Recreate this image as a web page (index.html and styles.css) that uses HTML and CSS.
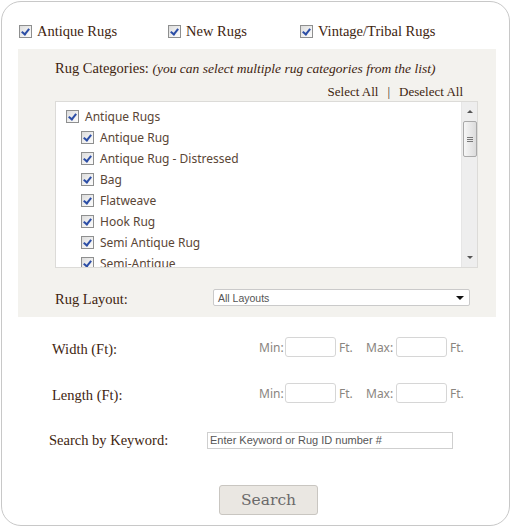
FILE: index.html
```html
<!DOCTYPE html>
<html>
<head>
<meta charset="utf-8">
<link rel="stylesheet" href="styles.css">
</head>
<body>
<div class="wrap">
  <div class="top">
    <label class="tc"><span class="cb"></span>Antique Rugs</label>
    <label class="tc"><span class="cb"></span>New Rugs</label>
    <label class="tc"><span class="cb"></span>Vintage/Tribal Rugs</label>
  </div>
  <div class="panel">
    <div class="cat-title">Rug Categories: <em>(you can select multiple rug categories from the list)</em></div>
    <div class="sel-links"><span>Select All</span><span class="sep">|</span><span>Deselect All</span></div>
    <div class="listbox">
      <div class="items">
        <div class="item"><span class="cb"></span>Antique Rugs</div>
        <div class="item sub"><span class="cb"></span>Antique Rug</div>
        <div class="item sub"><span class="cb"></span>Antique Rug - Distressed</div>
        <div class="item sub"><span class="cb"></span>Bag</div>
        <div class="item sub"><span class="cb"></span>Flatweave</div>
        <div class="item sub"><span class="cb"></span>Hook Rug</div>
        <div class="item sub"><span class="cb"></span>Semi Antique Rug</div>
        <div class="item sub"><span class="cb"></span>Semi-Antique</div>
      </div>
      <div class="sb">
        <div class="sb-btn"><span class="tri-up"></span></div>
        <div class="sb-thumb"><i></i><i></i><i></i></div>
        <div class="sb-fill"></div>
        <div class="sb-btn"><span class="tri-down"></span></div>
      </div>
    </div>
    <div class="layout-row">
      <span class="lbl">Rug Layout:</span>
      <div class="select"><span>All Layouts</span><span class="arrow"></span></div>
    </div>
  </div>
  <div class="dim-row first">
    <span class="dlbl">Width (Ft):</span>
    <span class="u u-min">Min:</span><span class="box"></span><span class="u u-ft">Ft.</span>
    <span class="u u-max">Max:</span><span class="box"></span><span class="u u-ft">Ft.</span>
  </div>
  <div class="dim-row second">
    <span class="dlbl">Length (Ft):</span>
    <span class="u u-min">Min:</span><span class="box"></span><span class="u u-ft">Ft.</span>
    <span class="u u-max">Max:</span><span class="box"></span><span class="u u-ft">Ft.</span>
  </div>
  <div class="kw-row">
    <span class="klbl">Search by Keyword:</span>
    <div class="kw-input">Enter Keyword or Rug ID number #</div>
  </div>
  <div class="btn-row"><div class="btn">Search</div></div>
</div>
</body>
</html>
```
FILE: styles.css
```css
html, body { margin: 0; padding: 0; background: #fff; }
body { font-family: "Liberation Serif", serif; color: #3e240f; }

.wrap {
  margin: 1px 0 0 1px;
  width: 509px;
  height: 525px;
  box-sizing: border-box;
  border: 1px solid #c8c8c8;
  border-radius: 20px;
}

.cb {
  position: relative;
  display: inline-block;
  width: 13px;
  height: 13px;
  box-sizing: border-box;
  border: 1px solid #8e8f8f;
  background: linear-gradient(135deg, #dcdcdc 0%, #f4f4f4 70%, #fbfbfb 100%);
  flex: none;
}
.cb::after {
  content: "";
  position: absolute;
  left: 3px;
  top: 1px;
  width: 3px;
  height: 6px;
  border-right: 2px solid #2c4ea6;
  border-bottom: 2px solid #2c4ea6;
  transform: rotate(38deg);
}

.top {
  height: 47px;
  box-sizing: border-box;
  padding: 11px 0 0 17px;
  display: grid;
  grid-template-columns: 149px 132px 1fr;
  align-items: center;
  font-size: 14.5px;
}
.tc { display: flex; align-items: center; gap: 5px; }

.panel {
  margin-left: 16px;
  width: 478px;
  height: 268px;
  box-sizing: border-box;
  background: #f3f2ee;
  padding: 9px 0 0 37px;
}
.cat-title { height: 20px; line-height: 20px; font-size: 14.5px; white-space: nowrap; }
.cat-title em { font-size: 13.5px; }
.sel-links {
  margin-top: 6px;
  width: 408px;
  height: 16px;
  line-height: 16px;
  font-size: 13px;
  display: flex;
  justify-content: flex-end;
}
.sel-links .sep { padding: 0 9px; }

.listbox {
  margin-top: 1px;
  width: 423px;
  height: 167px;
  box-sizing: border-box;
  border: 1px solid #dcdbd8;
  background: #fff;
  display: flex;
}
.items { flex: 1; overflow: hidden; padding: 4px 0 0 10px; }
.item {
  height: 21px;
  display: flex;
  align-items: center;
  gap: 6px;
  font-family: "Noto Sans", "Open Sans", sans-serif;
  font-size: 12px;
  color: #5a4636;
  white-space: nowrap;
}
.item.sub { padding-left: 15px; }

.sb {
  width: 16px;
  box-sizing: border-box;
  border-left: 1px solid #e6e6e6;
  background: #eeeeee;
  display: flex;
  flex-direction: column;
  align-items: center;
}
.sb-btn { height: 19px; width: 100%; display: flex; align-items: center; justify-content: center; }
.tri-up { width: 0; height: 0; border-left: 3px solid transparent; border-right: 3px solid transparent; border-bottom: 3px solid #555; }
.tri-down { width: 0; height: 0; border-left: 3px solid transparent; border-right: 3px solid transparent; border-top: 3px solid #555; }
.sb-thumb {
  width: 14px;
  height: 36px;
  box-sizing: border-box;
  border: 1px solid #a9a9a9;
  border-radius: 2px;
  background: linear-gradient(90deg, #f6f6f6, #dcdcdc);
  display: flex;
  flex-direction: column;
  align-items: center;
  justify-content: center;
  gap: 1px;
}
.sb-thumb i { display: block; width: 6px; height: 1px; background: #777; }
.sb-fill { flex: 1; }

.layout-row {
  margin-top: 21px;
  height: 17px;
  display: flex;
  align-items: center;
}
.lbl { width: 158px; font-size: 14.5px; padding-top: 3px; }
.select {
  width: 257px;
  height: 17px;
  box-sizing: border-box;
  border: 1px solid #cacaca;
  border-radius: 2px;
  background: #fff;
  display: flex;
  align-items: center;
  justify-content: space-between;
  padding: 0 5px 0 4px;
  font-family: "Liberation Sans", Arial, sans-serif;
  font-size: 10.5px;
  color: #555;
}
.arrow { width: 0; height: 0; border-left: 4px solid transparent; border-right: 4px solid transparent; border-top: 4px solid #111; }

.dim-row {
  height: 20px;
  display: flex;
  align-items: center;
  padding-left: 50px;
}
.dim-row.first { margin-top: 20px; }
.dim-row.second { margin-top: 26px; }
.dlbl { width: 207px; font-size: 14.5px; padding-top: 4px; }
.u {
  font-family: "Noto Sans", "Open Sans", sans-serif;
  font-size: 12px;
  color: #8a8580;
}
.u-min { width: 26px; }
.u-max { width: 30px; }
.u-ft { width: 27px; margin-left: 3px; }
.box {
  width: 51px;
  height: 20px;
  box-sizing: border-box;
  border: 1px solid #d6d6d6;
  border-radius: 3px;
  background: #fff;
}

.kw-row {
  margin-top: 29px;
  height: 17px;
  display: flex;
  align-items: center;
  padding-left: 47px;
}
.klbl { width: 158px; font-size: 14.5px; }
.kw-input {
  width: 246px;
  height: 17px;
  box-sizing: border-box;
  border: 1px solid #cfcfcf;
  background: #fff;
  padding-left: 2px;
  font-family: "Liberation Sans", Arial, sans-serif;
  font-size: 11px;
  line-height: 15px;
  color: #555;
}

.btn-row { margin-top: 36px; padding-left: 217px; }
.btn {
  width: 99px;
  height: 30px;
  box-sizing: border-box;
  border: 1px solid #c9c6c1;
  border-radius: 3px;
  background: #eae7e2;
  display: flex;
  align-items: center;
  justify-content: center;
  font-family: "DejaVu Serif", serif;
  font-size: 15.5px;
  color: #6a6a6a;
}
```
